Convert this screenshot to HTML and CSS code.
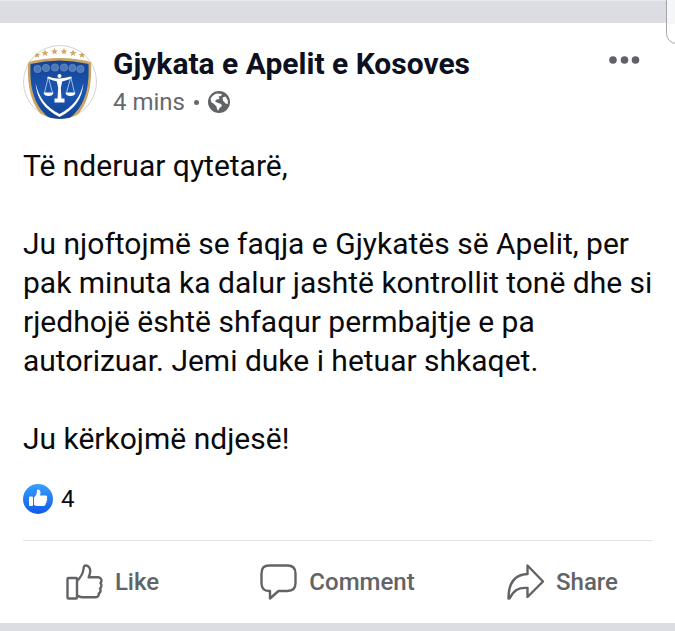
FILE: index.html
```html
<!DOCTYPE html>
<html lang="sq">
<head>
    <meta charset="UTF-8">
    <meta name="viewport" content="width=device-width, initial-scale=1">
    <title>Gjykata e Apelit e Kosoves</title>
    <link rel="stylesheet" href="styles.css">
</head>
<body>
    <div class="side-panel"></div>

    <article class="post">
        <header class="post-header">
            <svg class="avatar" viewBox="0 0 74 74" aria-hidden="true">
                <defs>
                    <clipPath id="round"><circle cx="37" cy="37" r="37"/></clipPath>
                    <linearGradient id="shield" x1="0" y1="0" x2="0" y2="1">
                        <stop offset="0" stop-color="#154391"/>
                        <stop offset="0.5" stop-color="#1a56b4"/>
                        <stop offset="1" stop-color="#123f8d"/>
                    </linearGradient>
                    <path id="star" d="M0-3.6 1-1.1 3.6-1 1.5.6 2.2 3.1 0 1.6-2.2 3.1-1.5.6-3.6-1-1-1.1Z"/>
                </defs>
                <circle cx="37" cy="37" r="36.500" fill="#fff"/>
                <circle cx="37" cy="37" r="36.500" fill="none" stroke="#d3d3d5"/>
                <g clip-path="url(#round)">
                    <path d="M5 17Q22 13 36.500 13Q52 13 68 17C69 45 65 69 36.500 84C8 69 4 45 5 17Z" fill="#cba461"/>
                    <path d="M7.500 19Q22 15.500 36.500 15.500Q51 15.500 65.500 19C66.500 45 62 66 36.500 80C11 66 6.500 45 7.500 19Z" fill="url(#shield)"/>
                    <g fill="#d0a65a">
                        <use href="#star" x="14" y="10"/>
                        <use href="#star" x="22" y="8"/>
                        <use href="#star" x="31.500" y="6.500"/>
                        <use href="#star" x="41" y="6.500"/>
                        <use href="#star" x="50" y="8"/>
                        <use href="#star" x="59" y="10"/>
                    </g>
                    <g fill="#4b77b8" stroke="#6d92c6" stroke-width="0.800">
                        <circle cx="14.500" cy="24" r="3.600"/>
                        <circle cx="23" cy="23" r="3.600"/>
                        <circle cx="32" cy="22.500" r="3.600"/>
                        <circle cx="41" cy="22.500" r="3.600"/>
                        <circle cx="49.500" cy="23" r="3.600"/>
                        <circle cx="57.500" cy="24" r="3.600"/>
                    </g>
                    <path d="M12.500 38C14 54 21 64 36.500 72C52 64 59 54 60.500 38C57 53 50 62 36.500 69C23 62 16 53 12.500 38Z" fill="#fff"/>
                    <g fill="#fff">
                        <circle cx="36.500" cy="31" r="2"/>
                        <path d="M25 31.500Q31 34 36.500 33.500T48 31.500L49 33Q43 36 39.200 36.500L37.800 43 38.500 53.500H41.500V57.500H31.500V53.500H34.500L35.200 43 33.800 36.500Q30 36 24 33Z"/>
                        <path d="M20.500 47.500H30.500Q30 51 25.500 51T20.500 47.500Z"/>
                        <path d="M42.500 47.500H52.500Q52 51 47.500 51T42.500 47.500Z"/>
                    </g>
                    <path d="M25 33 21.500 48M25.500 33 29.500 48M47.500 33 43.500 48M48 33 51.500 48" fill="none" stroke="#c5d5ec" stroke-width="0.800"/>
                </g>
            </svg>
            <div class="post-info">
                <h1 class="page-name">Gjykata e Apelit e Kosoves</h1>
                <div class="post-meta">
                    <span>4 mins</span>
                    <span class="dot"></span>
                    <svg class="globe" viewBox="0 0 22 22" role="img" aria-label="Public">
                        <circle cx="11" cy="11" r="11" fill="#616367"/>
                        <path d="M2.500 8Q4.500 3.500 9 2.500L14 3 13 5 10.500 5.500 11.500 8 8.500 8.500 7 10.500 9 11.500 13 13 14 15 11.500 17 10.500 19.500 9 18.500 8.500 15.500 5.500 12.500 3.500 11.500Z" fill="#fff"/>
                        <path d="M14.500 6.500 17.500 5.500 19.800 9.500 19.800 13 17.500 12.500 15 9.500Z" fill="#fff"/>
                    </svg>
                </div>
            </div>
            <button class="more" type="button" aria-label="More">
                <svg viewBox="0 0 31 8" fill="#616167">
                    <circle cx="4" cy="4" r="3.800"/>
                    <circle cx="15.500" cy="4" r="3.800"/>
                    <circle cx="26.500" cy="4" r="3.800"/>
                </svg>
            </button>
        </header>

        <div class="post-text">
            <p>Të nderuar qytetarë,</p>
            <p>Ju njoftojmë se faqja e Gjykatës së Apelit, per<br>
            pak minuta ka dalur jashtë kontrollit tonë dhe si<br>
            rjedhojë është shfaqur permbajtje e pa<br>
            autorizuar. Jemi duke i hetuar shkaqet.</p>
            <p>Ju kërkojmë ndjesë!</p>
        </div>

        <div class="reactions">
            <svg class="like-badge" viewBox="0 0 30 30" aria-hidden="true">
                <defs>
                    <linearGradient id="blue" x1="0" y1="0" x2="0" y2="1">
                        <stop offset="0" stop-color="#35a0fb"/>
                        <stop offset="1" stop-color="#1259ee"/>
                    </linearGradient>
                </defs>
                <circle cx="15" cy="15" r="15" fill="url(#blue)"/>
                <rect x="6" y="12.500" width="4" height="9.500" rx="1" fill="#fff"/>
                <path d="M11 13.500C13 11.500 14 10 14 6.500C14 4.800 17.500 5 17.500 8.500C17.500 10 17 11 17 11.500H22.500C24.500 11.500 24.500 13.800 23.700 14.300C24.500 15 24.300 16.500 23.400 17C23.800 18 23.500 19 22.600 19.500C22.800 21 22 22 20.500 22H15C13 22 12 21.500 11 21Z" fill="#fff"/>
            </svg>
            <span>4</span>
        </div>

        <footer class="actions">
            <button class="action" type="button">
                <svg viewBox="0 0 37 36">
                    <rect x="1.500" y="14" width="9.500" height="20.500" rx="1"/>
                    <path d="M11 17C14 14 17 10.500 17.500 5C17.700 2.500 18 1.500 19.500 1.500C22.500 1.500 24.500 4 24.200 7.500C24 10 23.500 11.500 22.700 13.300H32C34.500 13.300 36 15.500 35.300 17.500C35 18.600 34.500 19 34.500 19C36 21 35.500 23.500 34 24.500C35 26.500 34.500 28.500 32.800 29.500C33 32 31.500 33.300 29 33.300H17C14 33.300 13 32.500 11 31.500"/>
                </svg>
                Like
            </button>
            <button class="action" type="button">
                <svg viewBox="0 0 37 36">
                    <path d="M9 1.500H27.500Q35.500 1.500 35.500 9.500V19Q35.500 27 27.500 27H18.500L10 34.500V27H9Q1.500 27 1.500 19V9.500Q1.500 1.500 9 1.500Z"/>
                </svg>
                Comment
            </button>
            <button class="action" type="button">
                <svg viewBox="0 0 37 36">
                    <path d="M20.500 1.500 36 17.500 20.500 33V24C11 23 6.500 27 2.500 34.500H1.500C1.500 19 8 10.500 20.500 10Z"/>
                </svg>
                Share
            </button>
        </footer>
    </article>
</body>
</html>
```
FILE: styles.css
```css
* { box-sizing: border-box; }
html { overflow-x: hidden; }
body { margin: 0; padding: 22px 0 8px; border-top: 1px solid #e9eaee; background: #dcdde2; color: #0a0a0c; font-family: Roboto, "Liberation Sans", sans-serif; }
h1, p { margin: 0; }
button { padding: 0; border: none; background: none; color: inherit; font: inherit; cursor: pointer; }
svg { display: block; flex: none; }

.side-panel { position: absolute; top: -1px; right: -12px; width: 21px; height: 45px; border: 1px solid #a5a5a8; border-radius: 0 0 12px 12px; background: linear-gradient(#f5f6f8 24px, #fff 24px); }

.post { background: #fff; }
.post-header { display: flex; align-items: flex-start; padding: 22px 35px 0 23px; }
.avatar { width: 74px; height: 74px; }
.post-info { flex: 1; padding-left: 16px; }
.page-name { color: #0c1020; font-size: 30px; font-weight: 700; line-height: 38px; }
.post-meta { display: flex; align-items: center; gap: 9px; color: #67686c; font-size: 24px; line-height: 38px; }
.dot { width: 5px; height: 5px; border-radius: 50%; background: #67686c; }
.globe { width: 22px; height: 22px; }
.more { padding: 11px 0; }
.more svg { width: 31px; height: 8px; }

.post-text { padding: 25px 16px 0 23px; font-size: 30px; line-height: 39px; }
.post-text p + p { margin-top: 39px; }

.reactions { display: flex; align-items: center; gap: 8px; margin: 0 23px; padding: 26px 0; border-bottom: 1px solid #e3e4e6; font-size: 24px; line-height: 30px; }
.like-badge { width: 30px; height: 30px; }

.actions { display: grid; grid-template-columns: repeat(3, 1fr); }
.action { display: flex; align-items: center; justify-content: center; gap: 12px; height: 82px; color: #616367; font-size: 24px; font-weight: 500; }
.action svg { width: 37px; height: 36px; fill: none; stroke: #616367; stroke-width: 2.4; stroke-linejoin: round; }
```
